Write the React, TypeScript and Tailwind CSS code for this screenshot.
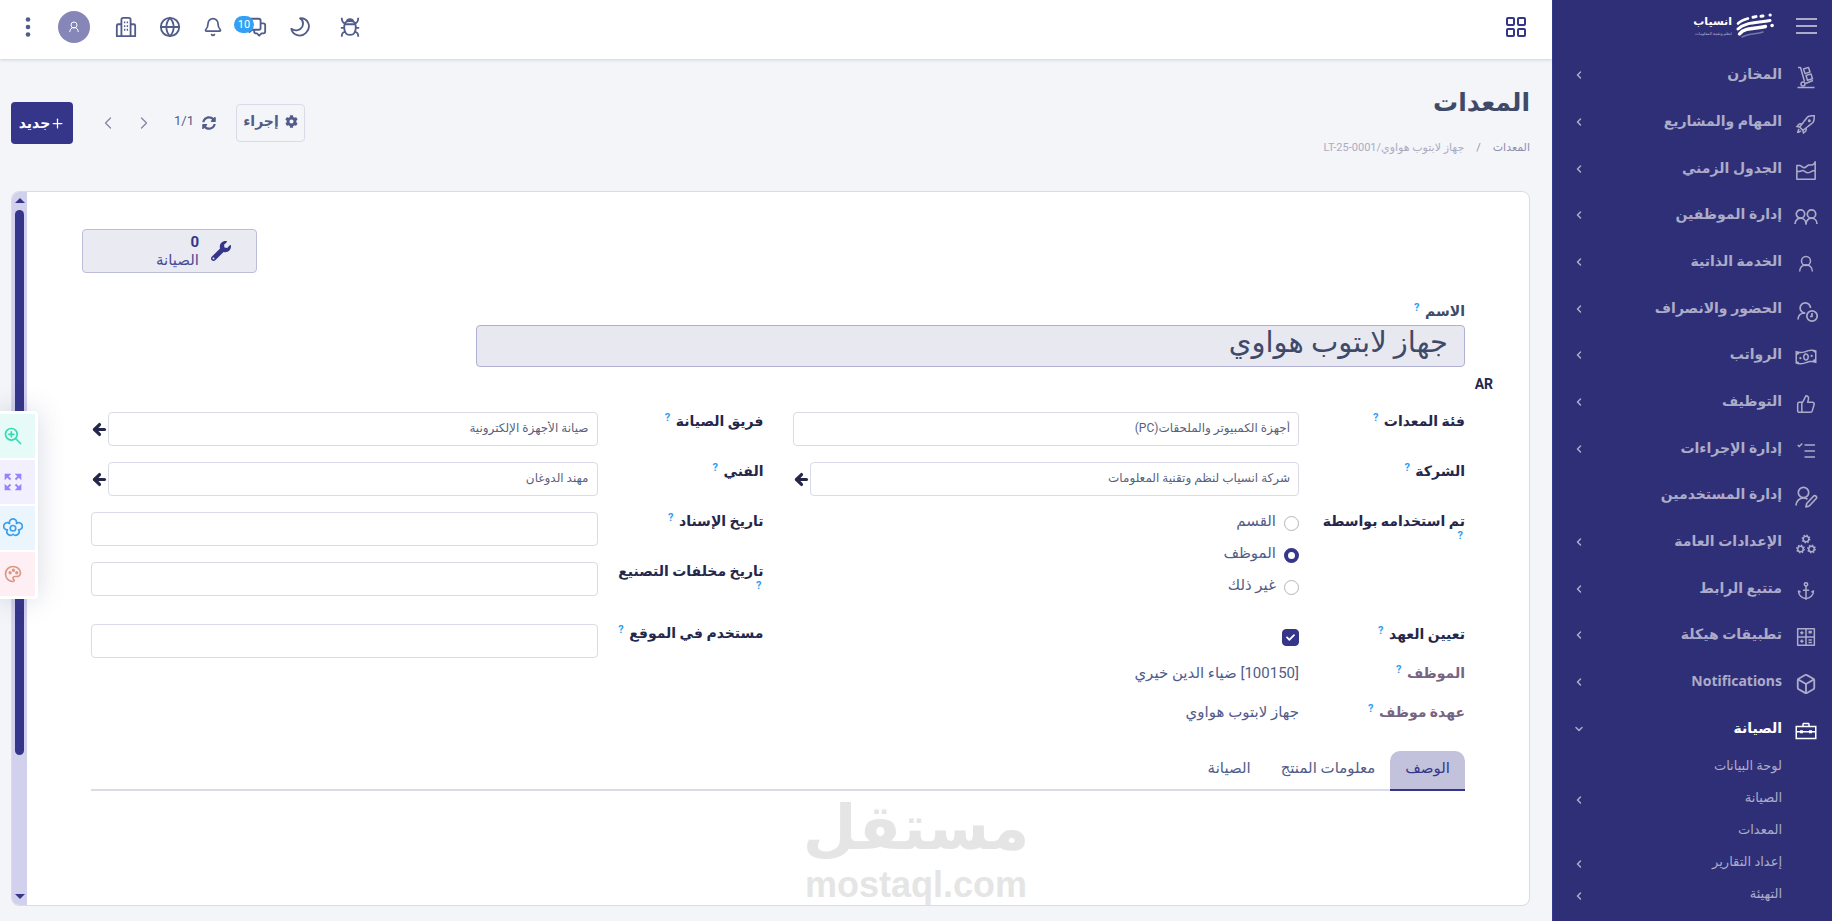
import React, { useState } from "react";
import { LiaRocketSolid, LiaMoneyBillWaveSolid, LiaTasksSolid, LiaToolboxSolid } from "react-icons/lia";
import { FaCheck, FaCog, FaSyncAlt, FaWrench } from "react-icons/fa";
import { TbPalette, TbZoomIn } from "react-icons/tb";
import {
  Anchor, ArrowLeft, Bell, Box, ChevronDown, ChevronLeft, ChevronRight, Globe, LayoutGrid, Plus, ThumbsUp,
} from "lucide-react";

function Icon({ className = "size-6", width = 2, children }: { className?: string; width?: number; children: React.ReactNode }) {
  return (
    <svg viewBox="0 0 24 24" className={className} fill="none" stroke="currentColor" strokeWidth={width} strokeLinejoin="round">
      {children}
    </svg>
  );
}

const Dolly = () => (
  <Icon width={1.5}>
    <path d="M4 2.500h2.500l4 14M3.500 22.500h17M11.500 18.500l7.500-3M9.500 4l5-1.600 1.500 4.600-5 1.600zM12 10.500l5-1.600 1.500 4.800-5 1.600z" />
    <circle cx="9" cy="19" r="2" />
  </Icon>
);
const AreaChart = () => (
  <Icon className="size-[22px]" width={1.7}>
    <path d="M2 21V6h3c2 0 3 2.500 5 2.500S13 6 15 5.500s3 .5 4.500-.5S22 3.500 22 2v19zM2 12.500h2c2 0 3-1 4.500-1s3 2.500 5.500 2.500 4-2.500 8-2.500" />
  </Icon>
);
const UserIcon = ({ className = "size-[22px]" }: { className?: string }) => (
  <Icon className={className} width={2}>
    <circle cx="12" cy="8" r="6" />
    <path d="M3.500 22c0-5.500 4-9 8.500-9s8.500 3.500 8.500 9" />
  </Icon>
);
const UsersIcon = () => (
  <Icon width={1.7}>
    <circle cx="6.500" cy="9" r="4.200" />
    <circle cx="17.500" cy="9" r="4.200" />
    <path d="M1 19c0-3.500 2.500-5.800 5.500-5.800S12 15.500 12 19c0-3.500 2.500-5.800 5.500-5.800S23 15.500 23 19" />
  </Icon>
);
const UserClock = () => (
  <Icon width={1.7}>
    <path d="M16.500 9a5.200 5.200 0 1 0-5.200 5.200M4 20.500c0-4 3-6.500 7-6.500" />
    <circle cx="18" cy="17" r="5.200" />
    <path d="M18 14v3.500h-2" />
  </Icon>
);
const UserEdit = () => (
  <Icon width={1.7}>
    <circle cx="9.500" cy="7.500" r="5.200" />
    <path d="M2 20.500c0-4.500 3.500-7.500 7.500-7.500 1.500 0 3 .5 4 1.200M12 22l.7-3.500 7-7.500c1.500-1.200 3.800.8 2.500 2.500l-7 7.500z" />
  </Icon>
);
const AppsGrid = () => (
  <Icon className="size-5" width={1.8}>
    <path d="M2 2h20v20H2zM12 2v20M2 12h20M5 7h4M7 5v4M15 7h4M15 5.500h4M5 17h4M7 15v4M15 15.500h4M15 18.500h4" />
  </Icon>
);
const Gears = () => (
  <Icon width={1.5}>
    {[[12, 7], [6.500, 17], [17.500, 17]].map(([x, y]) => (
      <g key={x}>
        <circle cx={x} cy={y} r="2.800" />
        <circle cx={x} cy={y} r="3.700" strokeDasharray="1.400 1.500" />
      </g>
    ))}
  </Icon>
);
const Flower = () => (
  <Icon className="size-5">
    <circle cx="12" cy="12.300" r="3.300" />
    <path d="M7.900 6.600A4.300 4.300 0 1 1 16.100 6.600A4.300 4.300 0 1 1 18.700 14.200A4.300 4.300 0 0 1 12 19.500A4.300 4.300 0 0 1 5.300 14.200A4.300 4.300 0 1 1 7.900 6.600Z" />
  </Icon>
);
const Expand = () => (
  <Icon className="size-5" width={2.4}>
    <path d="M4 4l5 5M20 4l-5 5M4 20l5-5M20 20l-5-5" />
    <path d="M2 10V2h8l-3 3-2 2zM14 2h8v8l-3-3-2-2zM22 14v8h-8l3-3 2-2zM10 22H2v-8l3 3 2 2z" fill="currentColor" stroke="none" />
  </Icon>
);
const BugIcon = () => (
  <Icon className="size-[22px]">
    <path d="M7 9h10M8.500 6.500C8.500 2.500 15.500 2.500 15.500 6.500M7 7c-1.500 3-1.500 8 0 11 1.500 3.500 8.500 3.500 10 0 1.500-3 1.500-8 0-11-1.500-2-8.500-2-10 0zM3 2c0 4 1.500 6 4 6.500M21 2c0 4-1.500 6-4 6.500M2 13h4M18 13h4M3 22.500c0-3.500 1-5 3.500-5.500M21 22.500c0-3.500-1-5-3.500-5.500" />
  </Icon>
);
const MoonIcon = () => (
  <Icon className="size-[22px]">
    <path d="M12 2.500C21 2 25 12 18.500 18.500C13 24 4 21 2.500 14C7 17 12.500 15.500 14.500 11.500C16 8 15 4.500 12 2.500Z" />
  </Icon>
);
const ChatIcon = () => (
  <Icon className="size-[22px]">
    <path d="M3 3h12c1 0 2 .5 2 2v8c0 1-1 2-2 2H8l-4 3M17 8h3c1 0 2 .5 2 2v7c0 1-1 2-2 2h-2l-2.500 2.500L13 19h-1c-1 0-2-1-2-2v-2" />
  </Icon>
);
const Building = () => (
  <Icon className="size-[22px]">
    <path d="M7 22V4c0-1 1-2 2-2h6c1 0 2 1 2 2v18zM7 9H3.500C2.500 9 2 9.500 2 10.500V22h20V10.500c0-1-.5-1.500-1.500-1.500H17" />
    <path d="M10.500 6v12M13.500 6v12" strokeWidth="1.500" strokeDasharray="2 2" />
  </Icon>
);

const menu: { label: string; icon: React.ReactNode; arrow?: boolean; open?: boolean }[] = [
  { label: "المخازن", icon: <Dolly />, arrow: true },
  { label: "المهام والمشاريع", icon: <LiaRocketSolid className="size-6" />, arrow: true },
  { label: "الجدول الزمني", icon: <AreaChart />, arrow: true },
  { label: "إدارة الموظفين", icon: <UsersIcon />, arrow: true },
  { label: "الخدمة الذاتية", icon: <UserIcon className="size-[18px]" />, arrow: true },
  { label: "الحضور والانصراف", icon: <UserClock />, arrow: true },
  { label: "الرواتب", icon: <LiaMoneyBillWaveSolid className="size-6" />, arrow: true },
  { label: "التوظيف", icon: <ThumbsUp className="size-5" strokeWidth={1.8} />, arrow: true },
  { label: "إدارة الإجراءات", icon: <LiaTasksSolid className="size-6" />, arrow: true },
  { label: "إدارة المستخدمين", icon: <UserEdit /> },
  { label: "الإعدادات العامة", icon: <Gears />, arrow: true },
  { label: "متتبع الرابط", icon: <Anchor className="size-5" strokeWidth={1.8} />, arrow: true },
  { label: "تطبيقات هيكلة", icon: <AppsGrid />, arrow: true },
  { label: "Notifications", icon: <Box className="size-[22px]" />, arrow: true },
  { label: "الصيانة", icon: <LiaToolboxSolid className="size-6" />, arrow: true, open: true },
];

const submenu = [
  { label: "لوحة البيانات", arrow: false },
  { label: "الصيانة", arrow: true },
  { label: "المعدات", arrow: false },
  { label: "إعداد التقارير", arrow: true },
  { label: "التهيئة", arrow: true },
];

function Logo() {
  return (
    <div className="flex items-center gap-1 text-white">
      <svg viewBox="0 0 38 26" className="h-[26px] w-[38px]" fill="none" stroke="currentColor" strokeLinecap="round">
        <path d="M2 10.500C5 7.500 8 6.500 12 5.500" strokeWidth="2.600" />
        <path d="M17 4.200l3-.6M25 3.200l2-.3M34 2h.3" strokeWidth="3" />
        <path d="M2 16C10 8.500 22 10 34 7.500" strokeWidth="3" />
        <path d="M3.500 21C9 14 20 16 29.500 13.500M36 12.500h.2" strokeWidth="3.400" />
        <path d="M6 24c8-4 14-2.500 21-5" strokeWidth="1.500" opacity=".35" />
      </svg>
      <div className="flex flex-col">
        <span className="text-[11px] leading-4 font-bold">انسياب</span>
        <span className="text-[4px] leading-[8px] opacity-60">لنظم وتقنية المعلومات</span>
      </div>
    </div>
  );
}

function Sidebar() {
  return (
    <aside className="flex w-[280px] shrink-0 flex-col border-l border-[#35398f] bg-[#2f2f77] text-[#acacc9]">
      <div className="flex h-[52px] shrink-0 items-center gap-[22px] ps-[15px]">
        <button type="button" aria-label="القائمة" className="flex w-[21px] flex-col gap-[5px]">
          <span className="h-[2px] bg-[#acacc9]" />
          <span className="h-[2px] bg-[#acacc9]" />
          <span className="h-[2px] bg-[#acacc9]" />
        </button>
        <Logo />
      </div>
      <nav className="flex min-h-0 flex-1 flex-col pb-[9px]">
        <ul className="flex flex-1 flex-col font-['Noto_Sans','DejaVu_Sans',sans-serif]">
          {menu.map((m) => (
            <li key={m.label} className="flex flex-1">
              <a href="#" className={`flex flex-1 items-center ps-[14px] pe-5 ${m.open ? "text-white" : ""}`}>
                <span className="flex w-6 justify-center pt-1">{m.icon}</span>
                <span className="ms-3 flex-1 pb-[2px] text-sm leading-6 font-bold">{m.label}</span>
                {m.arrow && (m.open
                  ? <ChevronDown className="size-3 text-[#acacc9]" strokeWidth={3} />
                  : <ChevronLeft className="size-3" strokeWidth={3} />)}
              </a>
            </li>
          ))}
        </ul>
        <ul>
          {submenu.map((m) => (
            <li key={m.label}>
              <a href="#" className="flex h-8 items-center ps-[50px] pe-5 text-[13px]">
                <span className="flex-1 pb-1">{m.label}</span>
                {m.arrow && <ChevronLeft className="size-3" strokeWidth={3} />}
              </a>
            </li>
          ))}
        </ul>
      </nav>
    </aside>
  );
}

function TopBar() {
  return (
    <header className="z-10 flex h-[59px] shrink-0 items-center justify-between bg-white ps-6 pe-5 pb-[6px] text-[#515c8a] shadow-[0_1px_3px_rgba(60,70,110,0.2)]">
      <button type="button" aria-label="التطبيقات" className="text-[#353589]"><LayoutGrid className="size-6" /></button>
      <div className="flex items-center">
        <button type="button" aria-label="تصحيح" className="me-7"><BugIcon /></button>
        <button type="button" aria-label="الوضع الليلي" className="me-[22px]"><MoonIcon /></button>
        <button type="button" aria-label="المحادثات" className="relative me-[22px]">
          <ChatIcon />
          <span className="absolute top-0 right-[13px] flex h-[17px] w-5 items-center justify-center rounded-full bg-[#339ff5] text-[11px] leading-[17px] text-white">10</span>
        </button>
        <button type="button" aria-label="الإشعارات" className="me-[22px]"><Bell className="size-5" /></button>
        <button type="button" aria-label="اللغة" className="me-[22px]"><Globe className="size-[22px]" /></button>
        <button type="button" aria-label="الشركة" className="me-[25px]"><Building /></button>
        <button type="button" aria-label="الحساب" className="me-5 flex size-8 items-center justify-center rounded-full bg-[#8686b8] text-white"><UserIcon className="size-3" /></button>
        <button type="button" aria-label="المزيد" className="-me-[2px]">
          <svg viewBox="0 0 20 20" className="size-5" fill="currentColor"><circle cx="10" cy="2.500" r="2.300" /><circle cx="10" cy="10" r="2.300" /><circle cx="10" cy="17.500" r="2.300" /></svg>
        </button>
      </div>
    </header>
  );
}

function Hint() {
  return <sup className="ms-[2px] text-[11px] font-bold text-[#2f9cf3]">?</sup>;
}

function Row({ id, label, tall, children }: { id?: string; label: string; tall?: boolean; children: React.ReactNode }) {
  return (
    <div className={`grid grid-cols-[166px_1fr] ${tall ? "h-[62px]" : "h-[50px]"}`}>
      <label htmlFor={id} className="pe-4 text-sm leading-[18px] font-bold text-[#24274a]">{label} <Hint /></label>
      {children}
    </div>
  );
}

function Field({ id, value, link }: { id: string; value?: string; link?: boolean }) {
  return (
    <div className="flex h-[34px] items-center">
      <input id={id} defaultValue={value} className="h-full min-w-0 flex-1 rounded border border-[#d9dbe8] bg-white px-2 pb-[2px] text-xs text-[#5a5f7d]" />
      {link && <button type="button" aria-label="فتح" className="w-[17px] text-[#24274a]"><ArrowLeft className="size-[17px]" strokeWidth={4.5} /></button>}
    </div>
  );
}

function Details() {
  const [used, setUsed] = useState("الموظف");
  const [assign, setAssign] = useState(true);
  return (
    <div className="mt-[18px] grid grid-cols-2 gap-x-[29px]">
      <div>
        <Row id="category" label="فئة المعدات"><Field id="category" value="أجهزة الكمبيوتر والملحقات(PC)" /></Row>
        <Row id="company" label="الشركة"><Field id="company" value="شركة انسياب لنظم وتقنية المعلومات" link /></Row>
        <div className="grid h-[112px] grid-cols-[166px_1fr]" role="radiogroup" aria-labelledby="used">
          <div id="used" className="pe-4 text-sm leading-[18px] font-bold text-[#24274a]">تم استخدامه بواسطة <Hint /></div>
          <div className="flex flex-col">
            {["القسم", "الموظف", "غير ذلك"].map((o) => (
              <label key={o} className="flex h-8 items-start gap-2 text-[15px] leading-[18px] text-[#515c8a]">
                <input
                  type="radio" name="used" checked={used === o} onChange={() => setUsed(o)}
                  className="mt-1 size-[15px] appearance-none rounded-full border border-[#b5b5b5] bg-white checked:border-4 checked:border-[#353589]"
                />
                {o}
              </label>
            ))}
          </div>
        </div>
        <div className="grid h-[39px] grid-cols-[166px_1fr]">
          <label htmlFor="assign" className="text-sm leading-5 font-bold text-[#24274a]">تعيين العهد <Hint /></label>
          <span className="relative mt-[5px] size-[17px]">
            <input
              id="assign" type="checkbox" checked={assign} onChange={() => setAssign(!assign)}
              className="block size-[17px] appearance-none rounded border border-[#353589] checked:bg-[#353589]"
            />
            {assign && <FaCheck className="pointer-events-none absolute top-1 left-1 size-[9px] text-white" />}
          </span>
        </div>
        {[["الموظف", "[100150] ضياء الدين خيري"], ["عهدة موظف", "جهاز لابتوب هواوي"]].map(([k, v]) => (
          <div key={k} className="grid h-[39px] grid-cols-[166px_1fr] text-sm leading-5">
            <span className="font-bold text-[#776482]">{k} <Hint /></span>
            <span className="text-[15px] text-[#515c8a]">{v}</span>
          </div>
        ))}
      </div>
      <div>
        <Row id="team" label="فريق الصيانة"><Field id="team" value="صيانة الأجهزة الإلكترونية" link /></Row>
        <Row id="tech" label="الفني"><Field id="tech" value="مهند الدوغان" link /></Row>
        <Row id="date" label="تاريخ الإسناد"><Field id="date" /></Row>
        <Row id="scrap" label="تاريخ مخلفات التصنيع" tall><Field id="scrap" /></Row>
        <Row id="site" label="مستخدم في الموقع"><Field id="site" /></Row>
      </div>
    </div>
  );
}

function Watermark() {
  return (
    <div className="pointer-events-none absolute top-[792px] left-[806px] flex w-[220px] flex-col items-center font-bold text-[#e5e5e5]">
      <span className="text-[62px] leading-[72px]">مستقل</span>
      <span className="font-['Liberation_Sans'] text-[36px] leading-[41px]">mostaql.com</span>
    </div>
  );
}

function QuickTools() {
  return (
    <div className="absolute top-[411px] left-0 flex w-[38px] flex-col gap-[2px] rounded-r bg-white py-[3px] pr-[3px] shadow-[0_0_28px_rgba(60,70,110,0.2)]">
      <button type="button" aria-label="تكبير" className="flex h-11 items-center justify-end bg-[#e6fbf7] pl-[3px] text-[#2fdcb4]"><TbZoomIn className="size-5" /></button>
      <button type="button" aria-label="ملء الشاشة" className="flex h-11 items-center justify-end bg-[#f2effe] pl-[3px] text-[#9585f8]"><Expand /></button>
      <button type="button" aria-label="الإعدادات" className="flex h-11 items-center justify-end bg-[#ebf5fe] pl-[3px] text-[#369ff0]"><Flower /></button>
      <button type="button" aria-label="الألوان" className="flex h-11 items-center justify-end bg-[#feeff5] pl-[3px] text-[#dc9780]"><TbPalette className="size-5" /></button>
    </div>
  );
}

export default function App() {
  return (
    <div dir="rtl" className="relative flex h-screen overflow-hidden bg-[#f4f5f9] font-['Roboto','DejaVu_Sans',sans-serif]">
      <Sidebar />
      <div className="flex min-w-0 flex-1 flex-col">
        <TopBar />
        <main className="flex min-h-0 flex-1 flex-col ps-[22px] pe-[11px] pb-[15px]">
          <div className="flex h-[132px] shrink-0 justify-between">
            <div className="pt-7">
              <h1 className="text-[25px] leading-8 font-bold text-[#3f4a68]">المعدات</h1>
              <nav className="mt-[21px] flex gap-3 text-[11px] leading-4 text-[#8d90ad]">
                <a href="#">المعدات</a>
                <span>/</span>
                <span className="text-[#aaacc3]">جهاز لابتوب هواوي/LT-25-0001</span>
              </nav>
            </div>
            <div className="mt-[43px] flex h-[42px] items-center text-[#515c8a]">
              <button type="button" className="me-5 flex h-[38px] w-[69px] items-center justify-center gap-[6px] rounded border border-[#d9dbe8] pb-1 text-sm font-bold"><FaCog className="size-[13px]" />إجراء</button>
              <button type="button" aria-label="تحديث"><FaSyncAlt className="size-[14px]" /></button>
              <span className="ms-2 pb-1 text-[13px]">1/1</span>
              <button type="button" aria-label="السابق" className="ms-5 text-[#8286a6]"><ChevronRight className="size-5" strokeWidth={1.5} /></button>
              <button type="button" aria-label="التالي" className="ms-4 text-[#8286a6]"><ChevronLeft className="size-5" strokeWidth={1.5} /></button>
              <button type="button" className="ms-[25px] flex h-[42px] w-[62px] items-center justify-center rounded bg-[#353589] text-sm font-bold text-white"><Plus className="size-[15px]" />جديد</button>
            </div>
          </div>

          <section className="flex min-h-0 flex-1 overflow-hidden rounded-lg border border-[#d9dbe8] bg-white">
            <div className="min-w-0 flex-1 overflow-hidden ps-16 pe-16 pt-[37px]">
              <div className="flex justify-end">
                <button type="button" className="-me-[9px] flex h-11 w-[175px] items-center gap-3 rounded border border-[#bcbcdb] bg-[#eaeaf2] ps-[25px] text-start text-[#353589]">
                  <FaWrench className="size-5" />
                  <span className="flex flex-col text-[15px] leading-[18px]"><b>0</b><span className="text-[#4b4b95]">الصيانة</span></span>
                </button>
              </div>
              <label htmlFor="name" className="mt-7 block text-sm leading-5 font-bold text-[#3f4a68]">الاسم <Hint /></label>
              <input id="name" defaultValue="جهاز لابتوب هواوي" className="mt-1 block h-[42px] w-[72%] rounded border border-[#b0b0d3] bg-[#e8e8f1] px-4 pb-[6px] text-[29px] text-[#3f4a68]" />
              <div className="-ms-7 mt-[7px] text-sm leading-5 font-bold text-[#24274a]">AR</div>
              <Details />
              <div role="tablist" className="mt-[10px] flex h-10 border-b-2 border-[#d9dbe8] text-[15px] text-[#515c8a]">
                <button type="button" role="tab" aria-selected="true" className="-mb-[2px] rounded-t-[10px] border-b-2 border-[#353589] bg-[#c2c2dc] px-[15px] pb-1 text-[#353589]">الوصف</button>
                <button type="button" role="tab" aria-selected="false" className="px-[15px] pb-1">معلومات المنتج</button>
                <button type="button" role="tab" aria-selected="false" className="px-[15px] pb-1">الصيانة</button>
              </div>
            </div>
            <div className="flex w-[15px] shrink-0 flex-col items-center bg-[#d2d1ed] py-[6px]">
              <span className="border-x-[5px] border-b-[5px] border-x-transparent border-b-[#353589]" />
              <span className="mt-[7px] w-[9px] flex-[543] rounded-full bg-[#353589]" />
              <span className="flex-[138]" />
              <span className="border-x-[5px] border-t-[5px] border-x-transparent border-t-[#353589]" />
            </div>
          </section>
        </main>
      </div>
      <Watermark />
      <QuickTools />
    </div>
  );
}
